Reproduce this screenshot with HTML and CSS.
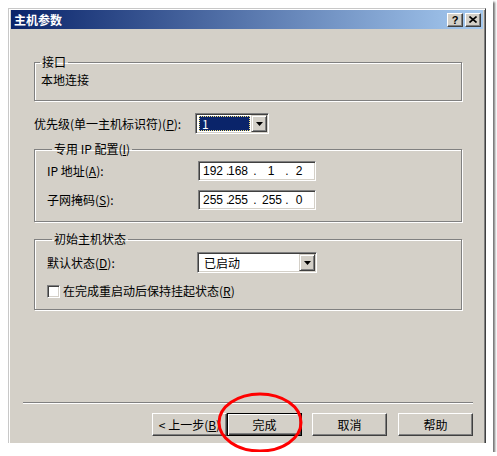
FILE: index.html
```html
<!DOCTYPE html>
<html>
<head>
  <title>主机参数</title>
  <link rel="stylesheet" href="styles.css">
</head>
<body>
  <div class="photo">
    <div class="window">
      <div class="titlebar">
        <span class="title">主机参数</span>
        <div class="title-btns">
          <span class="tbtn">?</span>
          <span class="tbtn">
            <svg width="8" height="7" viewBox="0 0 8 7"><path d="M0.5 0.5L7.5 6.5M7.5 0.5L0.5 6.5" stroke="#000" stroke-width="1.6" fill="none"/></svg>
          </span>
        </div>
      </div>

      <div class="content">
        <fieldset class="group g-iface">
          <legend>接口</legend>
          <div class="plain">本地连接</div>
        </fieldset>

        <div class="row priority">
          <label class="lbl">优先级(单一主机标识符)(<u>P</u>):</label>
          <div class="combo combo-prio">
            <span class="value selected">1</span>
            <span class="drop"><svg width="7" height="4" viewBox="0 0 7 4"><path d="M0 0H7L3.5 4Z" fill="#000"/></svg></span>
          </div>
        </div>

        <fieldset class="group g-ip">
          <legend>专用 IP 配置(<u>I</u>)</legend>
          <div class="row">
            <label class="lbl">IP 地址(<u>A</u>):</label>
            <div class="ipbox">
              <span class="o1">192</span><span class="d1">.</span><span class="o2">168</span><span class="d2">.</span><span class="o3">1</span><span class="d3">.</span><span class="o4">2</span>
            </div>
          </div>
          <div class="row second">
            <label class="lbl">子网掩码(<u>S</u>):</label>
            <div class="ipbox">
              <span class="o1">255</span><span class="d1">.</span><span class="o2">255</span><span class="d2">.</span><span class="o3">255</span><span class="d3">.</span><span class="o4">0</span>
            </div>
          </div>
        </fieldset>

        <fieldset class="group g-state">
          <legend>初始主机状态</legend>
          <div class="row">
            <label class="lbl">默认状态(<u>D</u>):</label>
            <div class="combo combo-state">
              <span class="value">已启动</span>
              <span class="drop"><svg width="7" height="4" viewBox="0 0 7 4"><path d="M0 0H7L3.5 4Z" fill="#000"/></svg></span>
            </div>
          </div>
          <div class="row check-row">
            <span class="checkbox"></span>
            <label>在完成重启动后保持挂起状态(<u>R</u>)</label>
          </div>
        </fieldset>
      </div>

      <div class="footer">
        <div class="sep"></div>
        <div class="buttons">
          <button class="btn">&lt; 上一步(<u>B</u>)</button>
          <button class="btn default">完成</button>
          <button class="btn cancel">取消</button>
          <button class="btn help">帮助</button>
        </div>
      </div>
    </div>

    <svg class="mark" width="90" height="64" viewBox="0 0 90 64">
      <ellipse cx="44" cy="31.5" rx="41" ry="28.5" fill="none" stroke="#f00" stroke-width="3"/>
    </svg>
  </div>
</body>
</html>
```

FILE: styles.css
```css
* {
  box-sizing: border-box;
}

body {
  margin: 0;
  background: #fff;
  font-family: "Noto Sans CJK SC", "Liberation Sans", sans-serif;
  font-size: 12px;
  color: #000;
}

u {
  text-decoration: underline;
}

/* white picture frame with a drop shadow */
.photo {
  position: relative;
  width: 493px;
  height: 452px;
  padding: 8px 0 0 8px;
  background: #fff;
  box-shadow: 2px 2px 2px rgba(0, 0, 0, 0.55);
}

.window {
  display: flex;
  flex-direction: column;
  width: 478px;
  height: 435px;
  padding: 1px 2px 0 2px;
  background: #d4d0c8;
  border: 1px solid;
  border-color: #c8c8c8 #404040 #d4d0c8 #c8c8c8;
  border-bottom: 0;
  box-shadow: inset 1px 1px #fff, inset -1px 0 #808080;
}

/* title bar */
.titlebar {
  display: flex;
  align-items: center;
  height: 19px;
  padding: 0 2px 0 3px;
  background: linear-gradient(to right, #0a246a, #a6caf0);
}

.title {
  color: #fff;
  font-weight: bold;
  line-height: 14px;
}

.title-btns {
  display: flex;
  gap: 2px;
  margin-left: auto;
}

.tbtn {
  display: flex;
  align-items: center;
  justify-content: center;
  width: 16px;
  height: 14px;
  background: #d4d0c8;
  border: 1px solid;
  border-color: #fff #404040 #404040 #fff;
  box-shadow: inset -1px -1px #808080;
  font: bold 11px/12px "Liberation Sans", sans-serif;
}

/* body of the dialog */
.content {
  flex: 1;
  padding: 26px 21px 0 23px;
}

.group {
  margin: 0;
  padding: 0;
  min-width: 0;
  border: 1px solid #808080;
  box-shadow: inset 1px 1px #fff, 1px 1px #fff;
}

.group legend {
  margin-left: 5px;
  padding: 0 2px;
  line-height: 14px;
}

.g-iface {
  padding: 4px 0 13px;
}

.plain {
  margin-left: 6px;
  line-height: 14px;
}

.g-ip {
  margin-top: 8px;
  padding: 5px 0 11px 12px;
}

.g-state {
  margin-top: 10px;
  padding: 6px 0 11px 12px;
}

.row {
  display: flex;
  align-items: center;
  line-height: 14px;
}

.priority {
  margin-top: 12px;
}

.priority .lbl {
  width: 161px;
}

.g-ip .lbl {
  width: 151px;
}

.g-state .lbl {
  width: 150px;
}

.second {
  margin-top: 9px;
}

.check-row {
  margin-top: 11px;
}

/* sunken controls */
.combo,
.ipbox,
.checkbox {
  background: #fff;
  border: 1px solid;
  border-color: #808080 #fff #fff #808080;
  box-shadow: inset 1px 1px #404040, inset -1px -1px #d4d0c8;
}

.combo {
  display: flex;
  height: 21px;
  padding: 1px;
}

.combo-prio {
  width: 74px;
}

.combo-state {
  width: 120px;
}

.value {
  flex: 1;
  margin: 1px 1px 1px 2px;
  padding-left: 2px;
  line-height: 13px;
  border: 1px solid transparent;
}

.value.selected {
  background: #0a246a;
  color: #fff;
  border: 1px dotted #f5e27a;
}

.drop {
  display: flex;
  align-items: center;
  justify-content: center;
  width: 16px;
  background: #d4d0c8;
  border: 1px solid;
  border-color: #d4d0c8 #404040 #404040 #d4d0c8;
  box-shadow: inset 1px 1px #fff, inset -1px -1px #808080;
}

.ipbox {
  display: flex;
  align-items: center;
  width: 118px;
  height: 20px;
  padding: 1px;
  font: 12px/14px "Liberation Sans", sans-serif;
}

.ipbox span {
  flex: none;
  text-align: center;
}

.ipbox .o1 { width: 26px; }
.ipbox .d1 { width: 2px; }
.ipbox .o2 { width: 20px; }
.ipbox .d2 { width: 14px; }
.ipbox .o3 { width: 18px; }
.ipbox .d3 { width: 14px; }
.ipbox .o4 { width: 10px; }

.checkbox {
  width: 13px;
  height: 13px;
  margin-right: 3px;
}

/* footer with wizard buttons */
.footer {
  padding: 0 10px 7px 12px;
}

.sep {
  height: 2px;
  border-top: 1px solid #808080;
  border-bottom: 1px solid #fff;
}

.buttons {
  display: flex;
  justify-content: flex-end;
  margin-top: 9px;
}

.btn {
  width: 75px;
  height: 23px;
  padding: 0;
  background: #d4d0c8;
  border: 1px solid;
  border-color: #fff #404040 #404040 #fff;
  box-shadow: inset -1px -1px #808080;
  font-family: "Noto Sans CJK SC", "Liberation Sans", sans-serif;
  font-size: 12px;
  line-height: 14px;
  color: #000;
}

.btn.default {
  border-color: #000;
  box-shadow: inset 1px 1px #fff, inset -1px -1px #404040, inset -2px -2px #808080;
}

.btn.cancel {
  margin-left: 10px;
}

.btn.help {
  margin-left: 11px;
}

/* red annotation circle drawn over the screenshot */
.mark {
  position: absolute;
  left: 216px;
  top: 391px;
}
```
